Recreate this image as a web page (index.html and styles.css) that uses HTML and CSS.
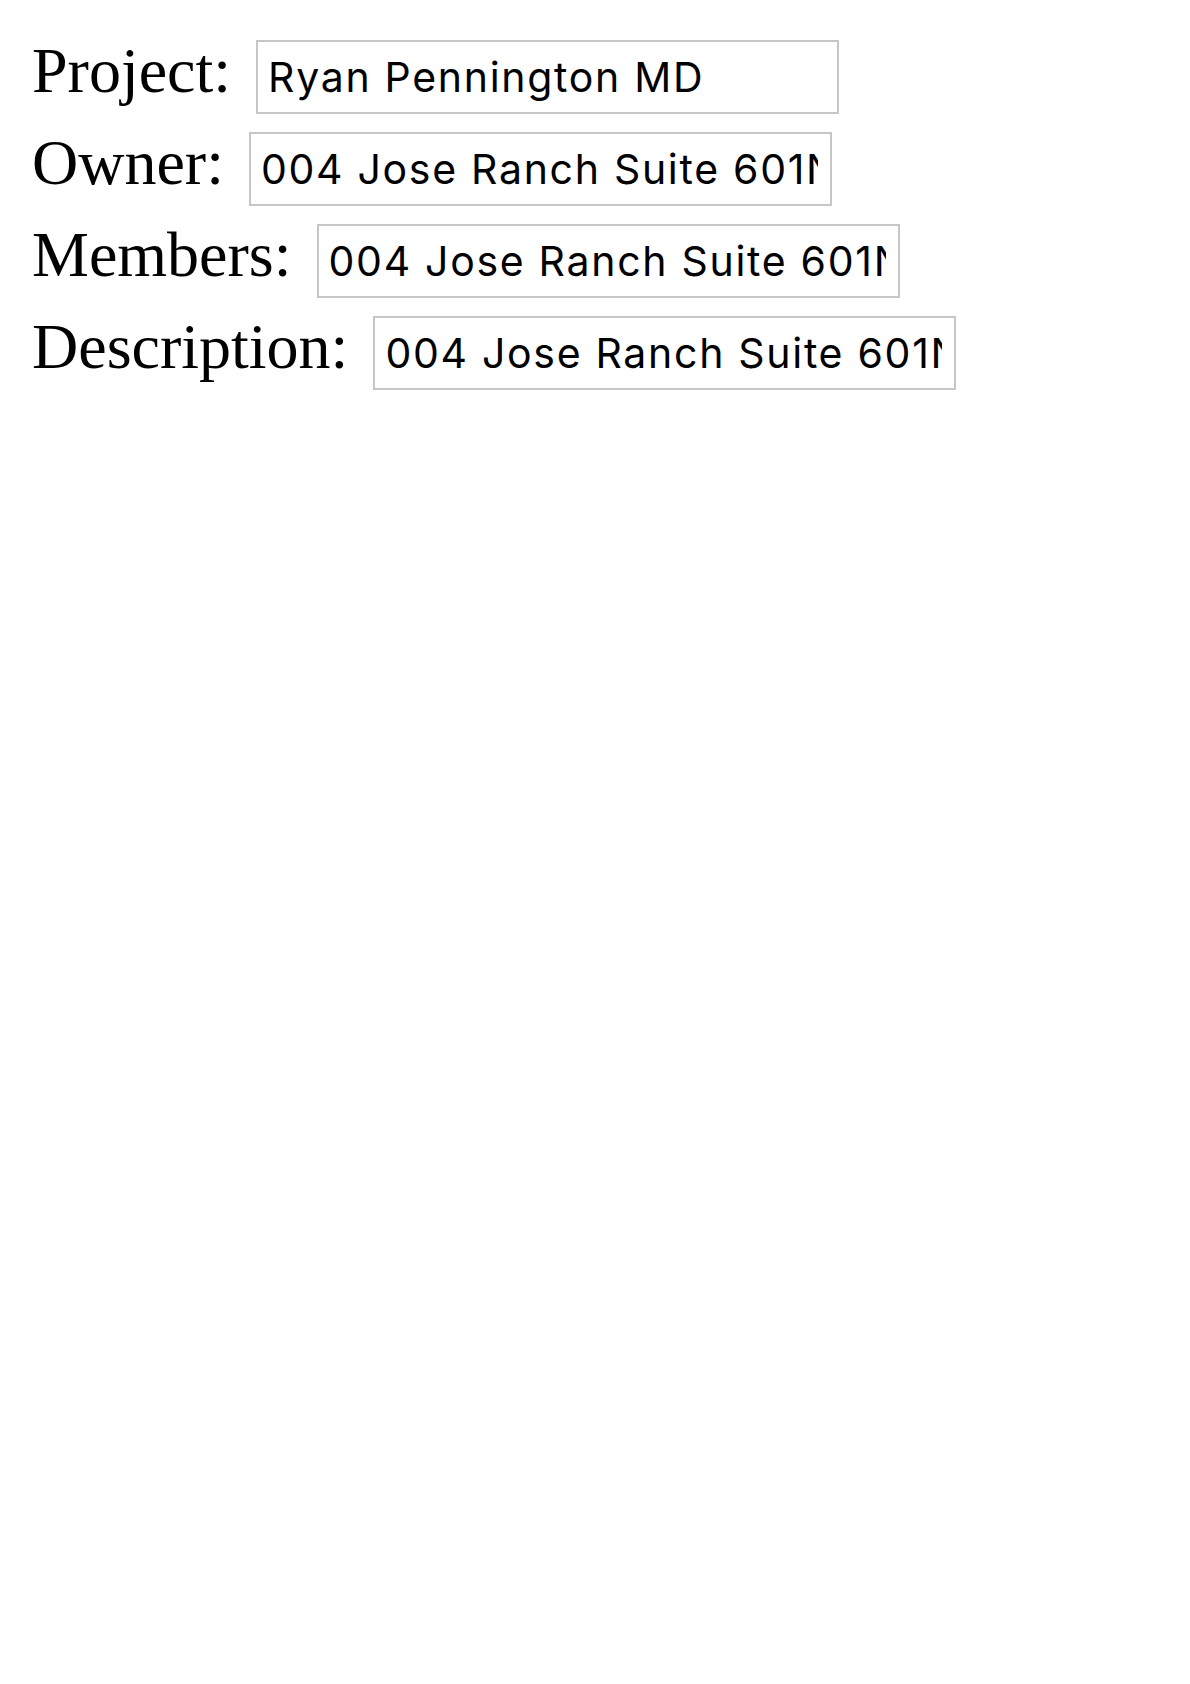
FILE: index.html
```html
<!DOCTYPE html>
<html>
<head>
  <title>Project</title>
  <link rel="stylesheet" href="styles.css">
</head>
<body>
  <form class="project-form">
    <div class="field">
      <label for="project">Project:</label>
      <input type="text" id="project" value="Ryan Pennington MD">
    </div>
    <div class="field">
      <label for="owner">Owner:</label>
      <input type="text" id="owner" value="004 Jose Ranch Suite 601North Aaron, NM 12345">
    </div>
    <div class="field">
      <label for="members">Members:</label>
      <input type="text" id="members" value="004 Jose Ranch Suite 601North Aaron, NM 12345">
    </div>
    <div class="field">
      <label for="description">Description:</label>
      <input type="text" id="description" value="004 Jose Ranch Suite 601North Aaron, NM 12345">
    </div>
  </form>
</body>
</html>
```

FILE: styles.css
```css
body {
  margin: 0;
  background-color: #fff;
  color: #000;
}

.project-form {
  padding: 34px 0 0 32px;
}

.field {
  display: flex;
  align-items: baseline;
  gap: 25px;
  margin-bottom: 12px;
}

label {
  font-family: "Liberation Serif", "Times New Roman", serif;
  font-size: 64px;
  line-height: 74px;
}

input {
  box-sizing: border-box;
  width: 583px;
  height: 74px;
  padding: 0 12px 0 10px;
  border: 2px solid #c6c6c6;
  border-radius: 0;
  font-family: Inter, "Liberation Sans", sans-serif;
  font-size: 41px;
  letter-spacing: 1.7px;
  color: #000;
  outline: none;
}
```
